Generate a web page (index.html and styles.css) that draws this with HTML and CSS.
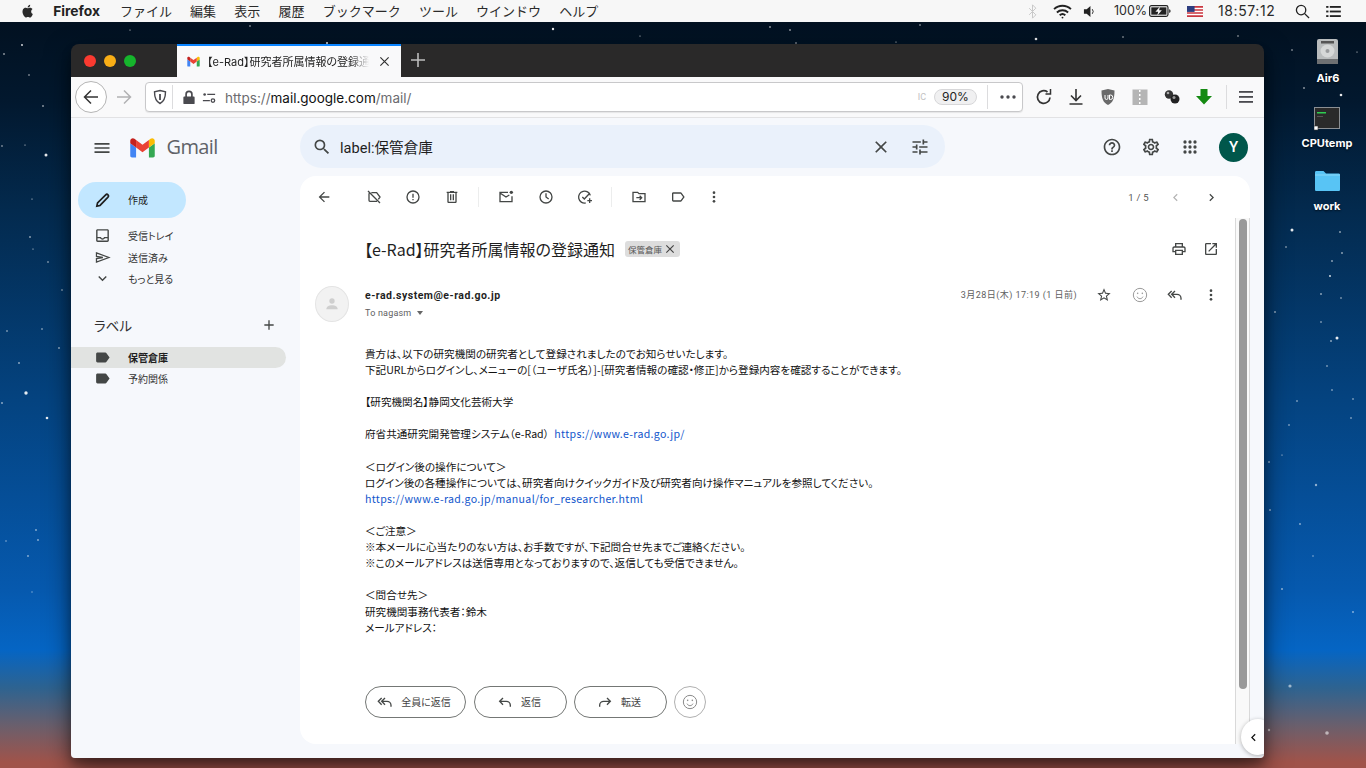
FILE: index.html
```html
<!DOCTYPE html>
<html lang="ja">
<head>
<meta charset="utf-8">
<title>Gmail</title>
<link rel="stylesheet" href="styles.css">
</head>
<body>
<div class="screen">
  <svg class="stars" width="1366" height="768" viewBox="0 0 1366 768" fill="#fff">
    <g opacity=".9">
      <circle cx="22" cy="45" r=".9"/><circle cx="4" cy="54" r=".8"/><circle cx="29" cy="75" r=".7"/><circle cx="43" cy="106" r=".8"/><circle cx="2" cy="146" r=".7"/><circle cx="46" cy="155" r="1.500"/><circle cx="25" cy="145" r=".6"/><circle cx="32" cy="199" r=".6"/><circle cx="30" cy="237" r=".8"/><circle cx="33" cy="249" r=".6"/><circle cx="48" cy="262" r=".7"/><circle cx="62" cy="290" r=".7"/><circle cx="42" cy="329" r=".7"/><circle cx="7" cy="331" r=".7"/><circle cx="59" cy="348" r=".8"/><circle cx="19" cy="363" r=".8"/><circle cx="26" cy="393" r="1.700"/><circle cx="47" cy="418" r="1.300"/><circle cx="2" cy="403" r=".8"/>
      <circle cx="250" cy="26" r=".7"/><circle cx="553" cy="29" r="1.200"/><circle cx="327" cy="43" r="1"/><circle cx="1036" cy="39" r="1.300"/><circle cx="790" cy="30" r=".8"/><circle cx="770" cy="27" r=".8"/><circle cx="920" cy="25" r=".7"/><circle cx="796" cy="43" r=".7"/><circle cx="896" cy="42" r=".6"/><circle cx="1123" cy="37" r=".7"/><circle cx="1238" cy="36" r=".7"/><circle cx="130" cy="30" r=".6"/><circle cx="640" cy="36" r=".6"/>
      <circle cx="1304" cy="88" r=".8"/><circle cx="1341" cy="95" r="1.300"/><circle cx="1292" cy="50" r=".7"/><circle cx="1357" cy="52" r=".6"/><circle cx="1292" cy="230" r="1.500"/><circle cx="1340" cy="232" r=".8"/><circle cx="1286" cy="247" r=".7"/><circle cx="1342" cy="253" r=".8"/><circle cx="1332" cy="261" r=".8"/><circle cx="1330" cy="276" r=".9"/><circle cx="1321" cy="294" r=".8"/><circle cx="1341" cy="298" r=".7"/><circle cx="1275" cy="312" r=".8"/><circle cx="1321" cy="322" r=".7"/><circle cx="1337" cy="338" r="1.500"/><circle cx="1331" cy="341" r=".8"/><circle cx="1327" cy="366" r=".7"/><circle cx="1332" cy="390" r=".7"/><circle cx="1353" cy="399" r=".7"/><circle cx="1297" cy="401" r=".7"/><circle cx="1351" cy="418" r=".7"/><circle cx="1289" cy="425" r=".7"/><circle cx="1282" cy="455" r=".6"/><circle cx="1269" cy="462" r=".8"/>
    </g>
    <g opacity=".55">
      <circle cx="36" cy="530" r=".9"/><circle cx="38" cy="540" r=".9"/><circle cx="6" cy="541" r=".8"/><circle cx="28" cy="556" r=".9"/><circle cx="32" cy="592" r=".7"/><circle cx="1316" cy="485" r="1.200"/><circle cx="1270" cy="510" r="1"/><circle cx="1300" cy="524" r=".9"/><circle cx="1313" cy="556" r=".8"/><circle cx="1282" cy="589" r="1"/><circle cx="1353" cy="612" r=".9"/><circle cx="1290" cy="686" r="1.600"/><circle cx="1327" cy="733" r="1.800"/><circle cx="1269" cy="730" r="1.200"/>
    </g>
  </svg>

  <header class="menubar">
    <div class="menu-left">
      <svg class="apple" viewBox="0 0 16 18"><path d="M11.600 9.500c0-1.800 1.500-2.700 1.600-2.800-.9-1.300-2.200-1.400-2.700-1.500-1.100-.1-2.200.7-2.800.7-.6 0-1.500-.7-2.400-.6-1.200 0-2.400.7-3 1.800-1.300 2.300-.3 5.600.9 7.400.6.9 1.400 1.900 2.300 1.900.9 0 1.300-.6 2.400-.6s1.400.6 2.400.6 1.600-.9 2.200-1.800c.7-1 1-2 1-2.100-.1 0-1.900-.7-1.900-2.800zM9.800 4.100c.5-.6.8-1.400.7-2.300-.7 0-1.600.5-2.100 1.100-.5.5-.9 1.400-.8 2.200.8.1 1.700-.4 2.200-1z"/></svg>
      <b class="app">Firefox</b>
      <span>ファイル</span><span>編集</span><span>表示</span><span>履歴</span><span>ブックマーク</span><span>ツール</span><span>ウインドウ</span><span>ヘルプ</span>
    </div>
    <div class="menu-right">
      <svg class="mi bt" viewBox="0 0 12 18" fill="none" stroke="#c9c9c9" stroke-width="1.200"><path d="M2 5l8 8-4 4V1l4 4-8 8"/></svg>
      <svg class="mi wifi" viewBox="0 0 20 16" fill="none" stroke="#222" stroke-width="2"><path d="M1 5.500a13 13 0 0 1 18 0M4 9a9 9 0 0 1 12 0M7 12a4.500 4.500 0 0 1 6 0"/><circle cx="10" cy="14.500" r="1" fill="#222" stroke="none"/></svg>
      <svg class="mi vol" viewBox="0 0 14 14"><path d="M1 4.500h3L8 1v12L4 9.500H1z" fill="#222"/><path d="M10 4.500a4 4 0 0 1 0 5" fill="none" stroke="#222"/></svg>
      <span class="pct">100%</span>
      <svg class="mi batt" viewBox="0 0 24 13"><rect x=".7" y=".7" width="20" height="11.600" rx="2" fill="none" stroke="#222" stroke-width="1.300"/><rect x="2.500" y="2.500" width="16.500" height="8" fill="#222"/><path d="M22 4.500v4c1 0 1.500-1 1.500-2s-.5-2-1.500-2z" fill="#222"/><path d="M12 1.500L7 7.300h3L9 11.500l5-5.800h-3z" fill="#f6f6f6"/></svg>
      <svg class="mi flag" viewBox="0 0 19 13"><rect width="19" height="13" fill="#c8333d"/><path d="M0 2h19v1.800H0zM0 5.600h19v1.800H0zM0 9.200h19V11H0z" fill="#fff"/><rect width="9" height="7" fill="#2b3d80"/></svg>
      <span class="clock">18:57:12</span>
      <svg class="mi msearch" viewBox="0 0 16 16" fill="none" stroke="#222" stroke-width="1.400"><circle cx="6.500" cy="6.500" r="5"/><path d="M10 10l5 5"/></svg>
      <svg class="mi mlist" viewBox="0 0 16 12" fill="#222"><rect x="0" y="0" width="2.500" height="2"/><rect x="4" y="0" width="12" height="2"/><rect x="0" y="5" width="2.500" height="2"/><rect x="4" y="5" width="12" height="2"/><rect x="0" y="10" width="2.500" height="2"/><rect x="4" y="10" width="12" height="2"/></svg>
    </div>
  </header>

  <div class="desk-icon drive">
    <svg width="28" height="28" viewBox="0 0 28 28"><rect x="3" y="1" width="21" height="25" rx="2" fill="#b9bcbd"/><rect x="3" y="21" width="21" height="5" fill="#6e7072"/><rect x="7" y="3" width="13" height="2.500" fill="#555"/><ellipse cx="13.500" cy="13" rx="7" ry="6.500" fill="#d6d8d8"/><circle cx="13.500" cy="13" r="2" fill="#9a9c9e"/></svg>
    <span>Air6</span>
  </div>
  <div class="desk-icon term">
    <svg width="27" height="26" viewBox="0 0 27 26"><rect x=".5" y=".5" width="25" height="21" fill="#2a2a2a" stroke="#8b8f93"/><rect x="3" y="5" width="9" height="1.500" fill="#2ecc50"/><rect x="3" y="9" width="6" height="1" fill="#555"/><rect x="0" y="19" width="4" height="4" fill="#fff" stroke="#333" stroke-width=".6"/></svg>
    <span>CPUtemp</span>
  </div>
  <div class="desk-icon folder">
    <svg width="27" height="22" viewBox="0 0 27 22"><path d="M1 2.500C1 1.500 1.500 1 2.500 1h7l2.500 2.500h12.500c1 0 1.500.5 1.500 1.500v14.500c0 1-.5 1.500-1.500 1.500h-22C1.500 21 1 20.500 1 19.500z" fill="#58c4f5"/><rect x="1" y="4.500" width="25" height="1" fill="#8ad8fa"/></svg>
    <span>work</span>
  </div>

  <main class="window">
    <div class="tabbar">
      <div class="lights"><i class="red"></i><i class="yellow"></i><i class="green"></i></div>
      <div class="tab">
        <svg class="favicon" viewBox="2 5 44 36"><path fill="#4285f4" d="M6 40h7V23L3 15.500V37c0 1.660 1.340 3 3 3z"/><path fill="#34a853" d="M35 40h7c1.660 0 3-1.340 3-3V15.500L35 23z"/><path fill="#fbbc04" d="M35 10v13l10-7.500v-4c0-3.700-4.200-5.800-7.200-3.600z"/><path fill="#ea4335" d="M13 23V10l11 8.250L35 10v13l-11 8.250z"/><path fill="#c5221f" d="M3 11.500v4L13 23V10l-2.800-2.100C7.200 5.700 3 7.800 3 11.500z"/></svg>
        <span class="tab-title">【e-Rad】研究者所属情報の登録通知</span>
        <svg class="tab-x" viewBox="0 0 12 12" fill="none" stroke="#333" stroke-width="1.300"><path d="M1.500 1.500l9 9M10.500 1.500l-9 9"/></svg>
      </div>
      <svg class="newtab" viewBox="0 0 14 14" fill="none" stroke="#bdbdbd" stroke-width="1.600"><path d="M7 0v14M0 7h14"/></svg>
    </div>

    <div class="navbar">
      <div class="back-btn"><svg viewBox="0 0 18 18" fill="none" stroke="#333" stroke-width="1.500"><path d="M16 9H2.500M9 2.500L2.500 9 9 15.500"/></svg></div>
      <svg class="fwd" viewBox="0 0 18 18" fill="none" stroke="#b1b1b3" stroke-width="1.500"><path d="M2 9h13.500M9 2.500L15.500 9 9 15.500"/></svg>
      <div class="urlbar">
        <svg class="shield" viewBox="0 0 16 16" fill="none" stroke="#4a4a4f" stroke-width="1.400"><path d="M8 1.500l5.500 1.300c0 6-1 9.500-5.500 11.700C3.500 12.300 2.500 8.800 2.500 2.800z"/><path d="M8 5v6" stroke-width="1.800"/></svg>
        <i class="bar-sep"></i>
        <svg class="lock" viewBox="0 0 12 16"><path d="M2 7V4.500a4 4 0 0 1 8 0V7h1a1 1 0 0 1 1 1v6a1 1 0 0 1-1 1H1a1 1 0 0 1-1-1V8a1 1 0 0 1 1-1zm1.800 0h4.400V4.500a2.200 2.200 0 0 0-4.400 0z" fill="#4a4a4f"/></svg>
        <svg class="perm" viewBox="0 0 16 14" fill="none" stroke="#4a4a4f" stroke-width="1.500"><circle cx="3" cy="3.500" r="1.500" fill="#4a4a4f" stroke="none"/><path d="M6 3.500h9M1 10.500h8"/><circle cx="12.500" cy="10.500" r="2"/></svg>
        <span class="url"><span class="dim">https://</span>mail.google.com<span class="dim">/mail/</span></span>
        <span class="ic">IC</span>
        <span class="zoompill">90%</span>
        <i class="bar-sep sep2"></i>
        <svg class="dots" viewBox="0 0 16 4" fill="#4a4a4f"><circle cx="2" cy="2" r="1.700"/><circle cx="8" cy="2" r="1.700"/><circle cx="14" cy="2" r="1.700"/></svg>
      </div>
      <div class="tools">
        <svg viewBox="0 0 18 18" fill="none" stroke="#333" stroke-width="1.700"><path d="M15 9.500A6.300 6.300 0 1 1 12.500 4"/><path d="M15.500 1v5h-5" stroke-width="1.500"/></svg>
        <svg viewBox="0 0 18 18" fill="none" stroke="#333" stroke-width="1.600"><path d="M9 1v11M4 7.500l5 5 5-5M2.500 16h13"/></svg>
        <svg viewBox="0 0 18 18"><path d="M9 1l6.500 1.500c0 8-1.500 12-6.500 14.500C4 14.500 2.500 10.500 2.500 2.500z" fill="#6a6a6a"/><path d="M6 7v3a1.500 1.500 0 0 0 3 0V7M10.500 7v4.500h1a2 2 0 0 0 0-4.500z" fill="none" stroke="#fff"/></svg>
        <svg viewBox="0 0 18 18"><rect x="1.500" y="1.500" width="15" height="15.500" fill="#b5b5b5"/><path d="M8 2h1.500v2H8zM8 6h1.500v2H8zM8 10h1.500v2H8zM8 14h1.500v2H8z" fill="#fff"/></svg>
        <svg viewBox="0 0 18 18"><circle cx="6" cy="6.500" r="4.200" fill="#333"/><circle cx="12" cy="11" r="4.500" fill="#222"/><circle cx="11" cy="9.500" r="1.500" fill="#999"/><circle cx="5" cy="5" r="1.300" fill="#aaa"/></svg>
        <svg viewBox="0 0 18 18"><path d="M5.500 1h7v7H17l-8 8.500L1 8h4.500z" fill="#158a12"/></svg>
      </div>
      <i class="nav-sep"></i>
      <svg class="burger" viewBox="0 0 14 12" fill="#4a4a4f"><rect width="14" height="1.800"/><rect y="5" width="14" height="1.800"/><rect y="10" width="14" height="1.800"/></svg>
    </div>

    <div class="gmail">
      <div class="g-head">
        <div class="brand">
          <svg class="g-menu" viewBox="0 0 24 24"><path d="M3 18h18v-2H3v2zm0-5h18v-2H3v2zm0-7v2h18V6H3z"/></svg>
          <svg class="g-logo" viewBox="2 5 44 36"><path fill="#4285f4" d="M6 40h7V23L3 15.500V37c0 1.660 1.340 3 3 3z"/><path fill="#34a853" d="M35 40h7c1.660 0 3-1.340 3-3V15.500L35 23z"/><path fill="#fbbc04" d="M35 10v13l10-7.500v-4c0-3.700-4.200-5.800-7.200-3.600z"/><path fill="#ea4335" d="M13 23V10l11 8.250L35 10v13l-11 8.250z"/><path fill="#c5221f" d="M3 11.500v4L13 23V10l-2.800-2.100C7.200 5.700 3 7.800 3 11.500z"/></svg>
          <span class="g-word">Gmail</span>
        </div>
        <div class="search">
          <svg class="s-ic" viewBox="0 0 24 24"><path d="M15.500 14h-.79l-.28-.27A6.471 6.471 0 0 0 16 9.500 6.500 6.500 0 1 0 9.500 16c1.610 0 3.090-.59 4.230-1.570l.27.28v.79l5 4.990L20.490 19l-4.990-5zm-6 0C7.010 14 5 11.990 5 9.500S7.010 5 9.500 5 14 7.010 14 9.500 11.990 14 9.500 14z"/></svg>
          <span class="s-text">label:保管倉庫</span>
          <svg class="s-x" viewBox="0 0 24 24"><path d="M19 6.410 17.590 5 12 10.590 6.410 5 5 6.410 10.590 12 5 17.590 6.410 19 12 13.410 17.590 19 19 17.590 13.410 12z"/></svg>
          <svg class="s-tune" viewBox="0 0 24 24"><path d="M3 17v2h6v-2H3zM3 5v2h10V5H3zm10 16v-2h8v-2h-8v-2h-2v6h2zM7 9v2H3v2h4v2h2V9H7zm14 4v-2H11v2h10zm-6-4h2V7h4V5h-4V3h-2v6z"/></svg>
        </div>
        <div class="g-actions">
          <svg viewBox="0 0 24 24"><path d="M11 18h2v-2h-2v2zm1-16C6.480 2 2 6.480 2 12s4.480 10 10 10 10-4.480 10-10S17.520 2 12 2zm0 18c-4.410 0-8-3.590-8-8s3.590-8 8-8 8 3.590 8 8-3.590 8-8 8zm0-14c-2.210 0-4 1.790-4 4h2c0-1.100.9-2 2-2s2 .9 2 2c0 2-3 1.750-3 5h2c0-2.250 3-2.500 3-5 0-2.210-1.790-4-4-4z"/></svg>
          <svg viewBox="0 0 24 24"><path d="M19.430 12.980c.04-.32.07-.64.07-.98 0-.34-.03-.66-.07-.98l2.110-1.650c.19-.15.24-.42.12-.64l-2-3.460c-.09-.16-.26-.25-.44-.25-.06 0-.12.01-.17.03l-2.490 1c-.52-.4-1.080-.73-1.690-.98l-.38-2.650C14.460 2.180 14.250 2 14 2h-4c-.25 0-.46.18-.49.42l-.38 2.650c-.61.25-1.170.59-1.690.98l-2.490-1c-.06-.02-.12-.03-.18-.03-.17 0-.34.09-.43.25l-2 3.460c-.13.22-.07.49.12.64l2.110 1.650c-.04.32-.07.65-.07.98 0 .33.03.66.07.98l-2.110 1.650c-.19.15-.24.42-.12.64l2 3.460c.09.16.26.25.44.25.06 0 .12-.01.17-.03l2.490-1c.52.4 1.080.73 1.690.98l.38 2.650c.03.24.24.42.49.42h4c.25 0 .46-.18.49-.42l.38-2.650c.61-.25 1.170-.59 1.690-.98l2.490 1c.06.02.12.03.18.03.17 0 .34-.09.43-.25l2-3.460c.12-.22.07-.49-.12-.64l-2.110-1.650zm-1.980-1.710c.04.31.05.52.05.73 0 .21-.02.43-.05.73l-.14 1.130.89.7 1.080.84-.7 1.210-1.270-.51-1.040-.42-.9.68c-.43.32-.84.56-1.250.73l-1.060.43-.16 1.130-.2 1.350h-1.400l-.19-1.350-.16-1.130-1.060-.43c-.43-.18-.83-.41-1.230-.71l-.91-.7-1.060.43-1.270.51-.7-1.210 1.080-.84.89-.7-.14-1.130c-.03-.31-.05-.54-.05-.74s.02-.43.05-.73l.14-1.130-.89-.7-1.080-.84.7-1.210 1.270.51 1.040.42.9-.68c.43-.32.84-.56 1.250-.73l1.060-.43.16-1.130.2-1.350h1.390l.19 1.350.16 1.130 1.060.43c.43.18.83.41 1.230.71l.91.7 1.060-.43 1.270-.51.7 1.210-1.070.85-.89.7.14 1.130zM12 8c-2.210 0-4 1.790-4 4s1.790 4 4 4 4-1.790 4-4-1.790-4-4-4zm0 6c-1.100 0-2-.9-2-2s.9-2 2-2 2 .9 2 2-.9 2-2 2z"/></svg>
          <svg viewBox="0 0 24 24"><circle cx="6" cy="6" r="2"/><circle cx="12" cy="6" r="2"/><circle cx="18" cy="6" r="2"/><circle cx="6" cy="12" r="2"/><circle cx="12" cy="12" r="2"/><circle cx="18" cy="12" r="2"/><circle cx="6" cy="18" r="2"/><circle cx="12" cy="18" r="2"/><circle cx="18" cy="18" r="2"/></svg>
          <span class="account">Y</span>
        </div>
      </div>

      <div class="g-body">
        <aside class="side">
          <div class="compose">
            <svg viewBox="0 0 24 24" fill="none" stroke="#1f1f1f" stroke-width="2.400"><path d="M4 20l1-4.500L16.500 4c1-1 2.300-1 3.300 0s1 2.300 0 3.300L8.500 19z"/></svg>
            <span>作成</span>
          </div>
          <nav class="nav">
            <div class="item"><svg viewBox="0 0 24 24"><path d="M19 3H5c-1.100 0-2 .9-2 2v14c0 1.100.9 2 2 2h14c1.100 0 2-.9 2-2V5c0-1.100-.9-2-2-2zm0 16H5v-3h3.560c.69 1.190 1.970 2 3.450 2s2.750-.81 3.450-2H19v3zm0-5h-4.990c0 1.100-.9 2-2 2s-2-.9-2-2H5V5h14v9z"/></svg><span>受信トレイ</span></div>
            <div class="item"><svg viewBox="0 0 24 24" fill="none" stroke="#444746" stroke-width="1.800"><path d="M3.500 5.500L21 12 3.500 18.500v-5l9-1.500-9-1.500z"/></svg><span>送信済み</span></div>
            <div class="item"><svg viewBox="0 0 24 24"><path d="M16.590 8.590 12 13.170 7.410 8.590 6 10l6 6 6-6z"/></svg><span>もっと見る</span></div>
          </nav>
          <div class="labels-head"><span>ラベル</span><svg viewBox="0 0 24 24"><path d="M19 13h-6v6h-2v-6H5v-2h6V5h2v6h6z"/></svg></div>
          <div class="item label active"><svg viewBox="0 0 24 24"><path d="M17.630 5.840C17.270 5.330 16.670 5 16 5L5 5.010C3.900 5.010 3 5.900 3 7v10c0 1.100.9 1.990 2 1.990L16 19c.67 0 1.270-.33 1.630-.84L22 12z"/></svg><span>保管倉庫</span></div>
          <div class="item label"><svg viewBox="0 0 24 24"><path d="M17.630 5.840C17.270 5.330 16.670 5 16 5L5 5.010C3.900 5.010 3 5.900 3 7v10c0 1.100.9 1.990 2 1.990L16 19c.67 0 1.270-.33 1.630-.84L22 12z"/></svg><span>予約関係</span></div>
        </aside>

        <section class="panel">
          <div class="actions">
            <svg class="a back" viewBox="0 0 24 24"><path d="M20 11H7.830l5.590-5.590L12 4l-8 8 8 8 1.410-1.410L7.830 13H20v-2z"/></svg>
            <div class="agroup g1">
              <svg class="a" viewBox="0 0 24 24" fill="none" stroke="#444746" stroke-width="2"><path d="M3 3l18 18M8 5.500h8l5 6.500-2.500 3.500M4.500 6.500V17c0 1 .5 1.500 1.500 1.500h10.500"/></svg>
              <svg class="a" viewBox="0 0 24 24" fill="none" stroke="#444746" stroke-width="2"><circle cx="12" cy="12" r="9"/><path d="M12 7v6M12 15v2"/></svg>
              <svg class="a" viewBox="0 0 24 24"><path d="M15 4V3H9v1H4v2h1v13c0 1.100.9 2 2 2h10c1.100 0 2-.9 2-2V6h1V4h-5zm2 15H7V6h10v13zM9 8h2v9H9zm4 0h2v9h-2z"/></svg>
            </div>
            <i class="a-sep"></i>
            <div class="agroup">
              <svg class="a" viewBox="0 0 24 24" fill="none" stroke="#444746" stroke-width="2"><path d="M15 5H3v14h18v-8M3 6l9 6 5-3"/><circle cx="20" cy="5" r="2.500" fill="#444746" stroke="none"/></svg>
              <svg class="a" viewBox="0 0 24 24" fill="none" stroke="#444746" stroke-width="2"><circle cx="12" cy="12" r="9"/><path d="M12 6.500V12l4 3"/></svg>
              <svg class="a" viewBox="0 0 24 24" fill="none" stroke="#444746" stroke-width="2"><path d="M20 9.500A9 9 0 1 0 13 21M8 12l3 3 7-7.500M19 14v7M15.500 17.500h7"/></svg>
            </div>
            <i class="a-sep"></i>
            <div class="agroup g3">
              <svg class="a" viewBox="0 0 24 24" fill="none" stroke="#444746" stroke-width="2"><path d="M3 5h7l2 2h9v12H3z"/><path d="M8 13h8M13 10l3 3-3 3"/></svg>
              <svg class="a" viewBox="0 0 24 24"><path d="M17.630 5.840C17.270 5.330 16.670 5 16 5L5 5.010C3.900 5.010 3 5.900 3 7v10c0 1.100.9 1.990 2 1.990L16 19c.67 0 1.270-.33 1.630-.84L22 12l-4.370-6.160zM16 17H5V7h11l3.550 5L16 17z"/></svg>
              <svg class="a" viewBox="0 0 24 24"><circle cx="12" cy="5.500" r="2"/><circle cx="12" cy="12" r="2"/><circle cx="12" cy="18.500" r="2"/></svg>
            </div>
            <div class="pager">
              <span>1 / 5</span>
              <svg viewBox="0 0 24 24" class="off"><path d="M15.410 7.410 14 6l-6 6 6 6 1.410-1.410L10.830 12z"/></svg>
              <svg viewBox="0 0 24 24"><path d="M8.590 16.590 10 18l6-6-6-6-1.410 1.410L13.170 12z"/></svg>
            </div>
          </div>

          <div class="scroller">
            <article class="mail">
              <div class="subject-row">
                <h1>【e-Rad】研究者所属情報の登録通知</h1>
                <span class="chip">保管倉庫<svg viewBox="0 0 24 24"><path d="M19 6.410 17.590 5 12 10.590 6.410 5 5 6.410 10.590 12 5 17.590 6.410 19 12 13.410 17.590 19 19 17.590 13.410 12z"/></svg></span>
                <div class="subject-tools">
                  <svg viewBox="0 0 24 24"><path d="M19 8h-1V3H6v5H5c-1.660 0-3 1.340-3 3v6h4v4h12v-4h4v-6c0-1.660-1.340-3-3-3zM8 5h8v3H8V5zm8 12v2H8v-4h8v2zm2-2v-2H6v2H4v-4c0-.55.45-1 1-1h14c.55 0 1 .45 1 1v4h-2z"/></svg>
                  <svg viewBox="0 0 24 24"><path d="M19 19H5V5h7V3H5c-1.110 0-2 .9-2 2v14c0 1.100.89 2 2 2h14c1.100 0 2-.9 2-2v-7h-2v7zM14 3v2h3.590l-9.830 9.830 1.410 1.410L19 6.410V10h2V3h-7z"/></svg>
                </div>
              </div>

              <div class="msg-head">
                <div class="avatar"><svg viewBox="0 0 24 24"><circle cx="12" cy="7.500" r="4" fill="#cfcfcf"/><path d="M3.500 20c0-4 4-6 8.500-6s8.500 2 8.500 6z" fill="#cfcfcf"/></svg></div>
                <div class="from">
                  <b>e-rad.system@e-rad.go.jp</b>
                  <span class="to">To nagasm <i class="caret"></i></span>
                </div>
                <span class="date">3月28日(木) 17:19 (1 日前)</span>
                <div class="msg-tools">
                  <svg viewBox="0 0 24 24"><path d="M22 9.240l-7.190-.62L12 2 9.190 8.630 2 9.240l5.460 4.730L5.820 21 12 17.270 18.180 21l-1.630-7.030L22 9.240zM12 15.400l-3.760 2.270 1-4.280-3.320-2.880 4.380-.38L12 6.100l1.710 4.040 4.380.38-3.320 2.880 1 4.280L12 15.400z"/></svg>
                  <svg class="smile" viewBox="0 0 24 24" fill="none" stroke="#9a9a9a" stroke-width="1.500"><circle cx="12" cy="12" r="10"/><circle cx="8.500" cy="9.500" r="1.200" fill="#9a9a9a" stroke="none"/><circle cx="15.500" cy="9.500" r="1.200" fill="#9a9a9a" stroke="none"/><path d="M7.500 14.500c1 2 2.700 3 4.500 3s3.500-1 4.500-3"/></svg>
                  <svg viewBox="0 0 24 24" fill="none" stroke="#444746" stroke-width="2"><path d="M7 6L2 11l5 5M12 6l-5 5 5 5M7 11h8a6 6 0 0 1 6 6v2"/></svg>
                  <svg viewBox="0 0 24 24"><circle cx="12" cy="5.500" r="2"/><circle cx="12" cy="12" r="2"/><circle cx="12" cy="18.500" r="2"/></svg>
                </div>
              </div>

              <div class="msg-body">
                <p>貴方は、以下の研究機関の研究者として登録されましたのでお知らせいたします。</p>
                <p>下記URLからログインし、メニューの[（ユーザ氏名）]-[研究者情報の確認・修正]から登録内容を確認することができます。</p>
                <p>&nbsp;</p>
                <p>【研究機関名】静岡文化芸術大学</p>
                <p>&nbsp;</p>
                <p>府省共通研究開発管理システム（e-Rad） <a class="inline-link" href="#">https://www.e-rad.go.jp/</a></p>
                <p>&nbsp;</p>
                <p>＜ログイン後の操作について＞</p>
                <p>ログイン後の各種操作については、研究者向けクイックガイド及び研究者向け操作マニュアルを参照してください。</p>
                <p><a href="#">https://www.e-rad.go.jp/manual/for_researcher.html</a></p>
                <p>&nbsp;</p>
                <p>＜ご注意＞</p>
                <p>※本メールに心当たりのない方は、お手数ですが、下記問合せ先までご連絡ください。</p>
                <p>※このメールアドレスは送信専用となっておりますので、返信しても受信できません。</p>
                <p>&nbsp;</p>
                <p>＜問合せ先＞</p>
                <p>研究機関事務代表者：鈴木</p>
                <p>メールアドレス：</p>
              </div>

              <div class="reply-row">
                <span class="pill w101"><svg viewBox="0 0 24 24" fill="none" stroke="#444746" stroke-width="2"><path d="M7 6L2 11l5 5M12 6l-5 5 5 5M7 11h8a6 6 0 0 1 6 6v2"/></svg>全員に返信</span>
                <span class="pill w93"><svg viewBox="0 0 24 24" fill="none" stroke="#444746" stroke-width="2"><path d="M9 6l-5 5 5 5M4 11h10a6 6 0 0 1 6 6v2"/></svg>返信</span>
                <span class="pill w93"><svg viewBox="0 0 24 24" fill="none" stroke="#444746" stroke-width="2"><path d="M15 6l5 5-5 5M20 11H10a6 6 0 0 0-6 6v2"/></svg>転送</span>
                <span class="round"><svg viewBox="0 0 24 24" fill="none" stroke="#8a8a8a" stroke-width="1.500"><circle cx="12" cy="12" r="10"/><circle cx="8.500" cy="9.500" r="1.200" fill="#8a8a8a" stroke="none"/><circle cx="15.500" cy="9.500" r="1.200" fill="#8a8a8a" stroke="none"/><path d="M7.500 14.500c1 2 2.700 3 4.500 3s3.500-1 4.500-3"/></svg></span>
              </div>
            </article>
            <div class="track"><i class="thumb"></i></div>
          </div>
        </section>
      </div>
      <div class="expand"><svg viewBox="0 0 24 24"><path d="M15.410 7.410 14 6l-6 6 6 6 1.410-1.410L10.830 12z"/></svg></div>
    </div>
  </main>
</div>
</body>
</html>
```

FILE: styles.css
```css
* { box-sizing: border-box; }
html, body { margin: 0; padding: 0; }
body { width: 1366px; height: 768px; overflow: hidden; font-family: Roboto, "Noto Sans CJK JP", sans-serif; }
svg { display: block; flex: none; }
i { display: block; }
.screen {
  position: relative; width: 1366px; height: 768px; overflow: hidden;
  background: linear-gradient(180deg, #020f1d 0, #02182e 100px, #032a4e 210px, #044380 400px, #0659ae 590px, #0565c4 650px, #2e6390 688px, #6b5f6c 726px, #a0534a 762px, #a0534a 768px);
}
.screen svg[stroke] { fill: none; }
.stars { position: absolute; left: 0; top: 0; }

/* menu bar */
.menubar { position: relative; height: 22px; background: #f7f7f7; display: flex; justify-content: space-between; align-items: center; font: 13px/22px "Inter", "Noto Sans CJK JP", sans-serif; color: #2a2a2a; }
.menu-left { display: flex; align-items: center; gap: 18.200px; padding-left: 21px; }
.menu-left .apple { width: 14px; height: 16px; fill: #2a2a2a; }
.menu-left .app { font-weight: 700; font-size: 13.800px; color: #222; width: 48.500px; }
.menu-right { display: flex; align-items: center; width: 340px; height: 22px; }
.mi { flex: none; }
.bt { width: 11px; height: 15px; margin-left: 1px; }
.wifi { width: 21px; height: 15px; margin-left: 14px; }
.vol { width: 13px; height: 13px; margin-left: 10px; }
.pct { margin-left: 18px; font-size: 12.500px; width: 30px; }
.batt { width: 22px; height: 12px; margin-left: 5px; }
.flag { width: 16px; height: 11px; margin-left: 16px; }
.clock { margin-left: 15px; font-size: 14px; width: 60px; letter-spacing: .6px; white-space: nowrap; }
.msearch { width: 15px; height: 15px; margin-left: 17px; }
.mlist { width: 19px; height: 11px; margin-left: 14px; }

/* desktop icons */
.desk-icon { position: absolute; display: flex; flex-direction: column; align-items: center; width: 80px; font: 700 11px/14px "Inter", Roboto, sans-serif; color: #fff; text-shadow: 0 1px 2px rgba(0,0,0,.7); }
.desk-icon span { display: block; }
.drive { left: 1288px; top: 38px; gap: 5px; }
.term { left: 1287px; top: 107px; gap: 3px; }
.folder { left: 1287px; top: 170px; gap: 7px; }

/* window */
.window { position: absolute; left: 71px; top: 44px; width: 1193px; height: 714px; border-radius: 8px 8px 4px 4px; overflow: hidden; display: flex; flex-direction: column; box-shadow: 0 10px 26px rgba(0,0,0,.55), 0 6px 10px rgba(0,0,0,.25); }
.tabbar { height: 33px; background: #2a2929; display: flex; align-items: stretch; flex: none; }
.lights { width: 106px; display: flex; align-items: center; gap: 8px; padding-left: 13px; }
.lights i { width: 12px; height: 12px; border-radius: 50%; }
.red { background: #fa3a30; }
.yellow { background: #f9ae16; }
.green { background: #16b52c; }
.tab { width: 224px; background: #f9f9fa; border-top: 2px solid #0a84ff; display: flex; align-items: center; padding: 0 10px; gap: 7px; }
.favicon { width: 13px; height: 11px; }
.tab-title { width: 162px; overflow: hidden; white-space: nowrap; font: 11px/16px "Inter", "Noto Sans CJK JP", sans-serif; font-feature-settings: "palt"; color: #222; -webkit-mask-image: linear-gradient(90deg, #000 88%, transparent); mask-image: linear-gradient(90deg, #000 88%, transparent); }
.tab-x { width: 11px; height: 11px; margin-left: 3px; }
.newtab { width: 14px; height: 14px; margin: 9px 0 0 10px; }

.navbar { height: 41px; flex: none; background: #f9f9fa; border-bottom: 1px solid #e2e2e4; display: flex; align-items: center; padding-left: 4px; }
.back-btn { width: 32px; height: 32px; border: 1px solid #b5b5b5; border-radius: 50%; background: #fff; display: flex; align-items: center; justify-content: center; }
.back-btn svg { width: 18px; height: 18px; }
.fwd { width: 18px; height: 18px; margin-left: 8px; }
.urlbar { width: 878px; height: 30px; margin-left: 12px; background: #fff; border: 1px solid #c8c8ca; border-radius: 4px; display: flex; align-items: center; padding-left: 6px; box-shadow: 0 1px 1px rgba(0,0,0,.08); }
.shield { width: 16px; height: 16px; }
.bar-sep { width: 1px; height: 24px; background: #dcdcde; margin-left: 4px; }
.lock { width: 12px; height: 15px; margin-left: 10px; }
.perm { width: 14px; height: 13px; margin-left: 7px; }
.url { font: 13.500px/20px "Inter", Roboto, sans-serif; margin: 2px 0 0 9px; color: #111; }
.url .dim { color: #6b6b6f; }
.ic { margin-left: auto; font-size: 9px; color: #c2c2c2; }
.zoompill { width: 43px; height: 16px; margin-left: 8px; border-radius: 8px; background: #f0f0f1; border: 1px solid #d7d7d9; font: 12px/14px "Inter", Roboto, sans-serif; text-align: center; color: #222; }
.sep2 { margin-left: 10px; }
.dots { width: 16px; height: 4px; margin: 0 6px 0 12px; }
.tools { display: flex; margin-left: 12px; gap: 14px; }
.tools svg { width: 18px; height: 18px; }
.nav-sep { width: 1px; height: 24px; background: #dcdcde; margin-left: 13px; }
.burger { width: 14px; height: 12px; margin-left: 12px; }

/* gmail */
.gmail { flex: 1; min-height: 0; background: #f6f8fc; display: flex; flex-direction: column; position: relative; }
.g-head { height: 58px; flex: none; display: flex; align-items: flex-start; }
.brand { width: 229px; height: 58px; display: flex; align-items: center; padding-left: 21px; }
.g-menu { width: 20px; height: 20px; fill: #444746; margin-top: 1px; }
.g-logo { width: 27px; height: 21px; margin: 1px 0 0 16.500px; }
.g-word { font: 400 20px/24px "Open Sans", Roboto, sans-serif; color: #5f6368; margin-left: 11px; letter-spacing: -.6px; }
.search { width: 645px; height: 43px; margin-top: 7px; border-radius: 22px; background: #eaf1fb; display: flex; align-items: center; padding-left: 12px; }
.s-ic { width: 20px; height: 20px; fill: #444746; }
.s-text { font: 14.600px/20px Roboto, "Noto Sans CJK JP", sans-serif; color: #1f1f1f; margin: 3px 0 0 8px; flex: 1; }
.s-x { width: 20px; height: 20px; fill: #444746; }
.s-tune { width: 20px; height: 20px; fill: #444746; margin: 0 15px 0 19px; }
.g-actions { display: flex; align-items: center; height: 58px; margin-left: 157px; gap: 19px; }
.g-actions svg { width: 20px; height: 20px; fill: #444746; }
.account { width: 29px; height: 29px; border-radius: 50%; background: #00574b; color: #fff; font: 500 15px/29px Roboto, sans-serif; text-align: center; }
.g-body { flex: 1; min-height: 0; display: flex; align-items: stretch; padding-bottom: 14px; }

.side { width: 229px; flex: none; font-size: 10px; color: #333; font-feature-settings: "palt"; padding-top: 6px; }
.compose { margin-left: 7px; width: 108px; height: 36px; border-radius: 18px; background: #c2e7ff; display: flex; align-items: center; padding-left: 16px; gap: 17px; color: #222; font-size: 10px; }
.compose svg { width: 17px; height: 17px; }
.compose span { margin-top: -1px; }
.nav { margin-top: 7px; }
.item { height: 21.500px; display: flex; align-items: center; padding-left: 23px; gap: 17px; }
.item svg { width: 17px; height: 17px; fill: #444746; }
.labels-head { margin-top: 24px; height: 22px; display: flex; align-items: center; justify-content: space-between; padding: 0 23px; font-size: 13.500px; color: #333; }
.labels-head svg { width: 16px; height: 16px; fill: #444746; }
.labels-head + .label { margin-top: 11px; }
.active { width: 215px; border-radius: 0 11px 11px 0; background: #e1e3e1; font-weight: 700; color: #1f1f1f; }

.panel { width: 950px; flex: none; background: #fff; border-radius: 16px; display: flex; flex-direction: column; min-height: 0; }
.actions { height: 42px; flex: none; display: flex; align-items: center; padding-left: 16px; }
.a { width: 16px; height: 16px; fill: #444746; }
.agroup { display: flex; gap: 23.500px; }
.g1 { margin-left: 34px; gap: 23px; }
.a-sep { width: 1px; height: 20px; background: #eceded; margin: 0 19px 0 18px; }
.g3 { gap: 23px; }
.g3 .a:last-child { margin-left: -3px; }
.pager { margin-left: auto; display: flex; align-items: center; padding-right: 31px; font-size: 9.500px; color: #555; letter-spacing: .3px; }
.pager svg { width: 15px; height: 15px; fill: #444746; margin-left: 21px; }
.pager .off { fill: #b5b5b5; margin-left: 19px; }

.scroller { flex: 1; min-height: 0; display: flex; }
.mail { flex: 1; min-width: 0; padding-left: 65px; position: relative; }
.subject-row { height: 62px; display: flex; align-items: center; margin-left: -1px; }
h1 { margin: 0; font: 400 16px/22px "Noto Sans CJK JP", sans-serif; font-feature-settings: "palt"; color: #1f1f1f; }
.chip { margin-left: 10px; width: 55px; height: 16px; border-radius: 3px; background: #ddd; display: flex; align-items: center; padding-left: 3px; font-size: 8.500px; color: #555; font-feature-settings: "palt"; }
.chip svg { width: 14px; height: 14px; fill: #444; margin-left: 1px; }
.subject-tools { margin-left: auto; display: flex; gap: 16px; padding-right: 16px; }
.subject-tools svg { width: 16px; height: 16px; fill: #444746; }
.msg-head { position: relative; display: flex; align-items: flex-start; height: 66px; }
.avatar { position: absolute; left: -50px; top: 6px; width: 34px; height: 36px; border-radius: 50%; border: 1px solid #e4e4e4; background: #f2f2f2; display: flex; align-items: center; justify-content: center; }
.avatar svg { width: 16px; height: 16px; }
.from { display: flex; flex-direction: column; padding-top: 9px; }
.from b { font: 700 10.500px/14px Roboto, sans-serif; color: #1f1f1f; letter-spacing: .5px; }
.to { font: 9px/12px Roboto, sans-serif; color: #5e5e5e; margin-top: 4px; display: flex; align-items: center; gap: 6px; letter-spacing: .2px; }
.caret { width: 0; height: 0; border: 3.500px solid transparent; border-top: 4px solid #666; border-bottom: 0; }
.date { margin-left: auto; padding-top: 8px; font: 9px/14px Roboto, "Noto Sans CJK JP", sans-serif; color: #5e5e5e; letter-spacing: .45px; }
.msg-tools { display: flex; gap: 19.670px; padding: 7px 16px 0 19px; }
.msg-tools svg { width: 16px; height: 16px; fill: #444746; }
.msg-body { font: 10.600px/16.100px "Noto Sans CJK JP", sans-serif; font-feature-settings: "palt"; color: #111; }
.msg-body p { margin: 0; white-space: nowrap; }
.msg-body a { color: #1155cc; text-decoration: none; letter-spacing: .32px; }
.msg-body .inline-link { margin-left: 3px; }
.reply-row { display: flex; align-items: center; gap: 7px; margin-top: 50px; font-size: 10px; color: #444; font-feature-settings: "palt"; }
.pill { height: 32px; border: 1px solid #747775; border-radius: 16px; display: flex; align-items: center; justify-content: center; gap: 8px; padding-right: 3px; }
.pill svg { width: 16px; height: 16px; }
.w101 { width: 101px; margin-right: 1px; }
.w93 { width: 93px; }
.round { width: 32px; height: 32px; border: 1px solid #b0b0b0; border-radius: 50%; display: flex; align-items: center; justify-content: center; }
.round svg { width: 16px; height: 16px; }
.track { width: 15px; flex: none; background: #f9f9f9; border-left: 1px solid #d9d9d9; border-right: 1px solid #d9d9d9; padding: 1px 2px 0 3px; }
.thumb { width: 8px; height: 470px; border-radius: 4px; background: #999; }
.expand { position: absolute; right: -11px; bottom: 3px; width: 34px; height: 36px; border-radius: 50%; background: #fff; box-shadow: 0 1px 4px rgba(0,0,0,.3); display: flex; align-items: center; padding-left: 5px; }
.expand svg { width: 15px; height: 15px; fill: #111; }
```
